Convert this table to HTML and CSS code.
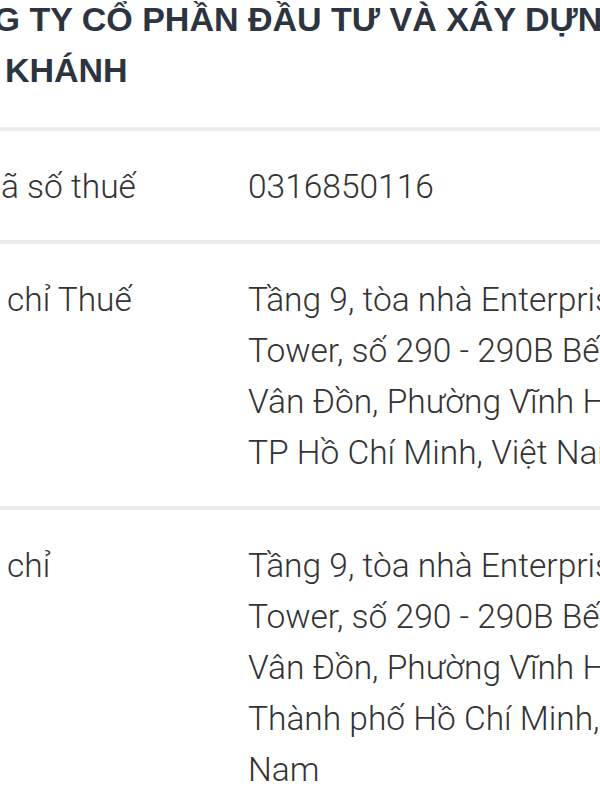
FILE: index.html
```html
<!DOCTYPE html>
<html lang="vi">
<head>
<meta charset="utf-8">
<title>Thông tin doanh nghiệp</title>
<link rel="stylesheet" href="styles.css">
</head>
<body>
<main class="page">
  <h1 class="title">CÔNG TY CỔ PHẦN ĐẦU TƯ VÀ XÂY DỰNG<br>NAM KHÁNH</h1>
  <dl class="info">
    <div class="row">
      <dt class="label">Mã số thuế</dt>
      <dd class="value">0316850116</dd>
    </div>
    <div class="row">
      <dt class="label label-indent">chỉ Thuế</dt>
      <dd class="value">Tầng 9, tòa nhà Enterprise<br>Tower, số 290 - 290B Bến<br>Vân Đồn, Phường Vĩnh Hội,<br>TP Hồ Chí Minh, Việt Nam</dd>
    </div>
    <div class="row">
      <dt class="label label-indent">chỉ</dt>
      <dd class="value">Tầng 9, tòa nhà Enterprise<br>Tower, số 290 - 290B Bến<br>Vân Đồn, Phường Vĩnh Hội,<br>Thành phố Hồ Chí Minh, Việt<br>Nam</dd>
    </div>
  </dl>
</main>
</body>
</html>
```
FILE: styles.css
```css
html, body {
  margin: 0;
  padding: 0;
  background: #ffffff;
}
body {
  width: 600px;
  height: 800px;
  overflow: hidden;
}
.page {
  margin-left: -82px;
  width: 900px;
}
.title {
  margin: -6px 0 0;
  padding: 0 0 31px;
  font-family: "Liberation Sans", Arial, sans-serif;
  font-weight: 700;
  font-size: 34px;
  line-height: 51px;
  color: #2c3440;
  white-space: nowrap;
}
.info {
  margin: 0;
  padding: 0;
}
.row {
  display: grid;
  grid-template-columns: 276px 1fr;
  padding: 30px 0 28px 54px;
  border-top: 4px solid #ececec;
  font-family: Roboto, "Liberation Sans", sans-serif;
  font-weight: 300;
  font-size: 33.5px;
  line-height: 51px;
  color: #333333;
}
.label {
  margin: 0;
}
.label-indent {
  padding-left: 35px;
}
.value {
  margin: 0;
  white-space: nowrap;
}
```
